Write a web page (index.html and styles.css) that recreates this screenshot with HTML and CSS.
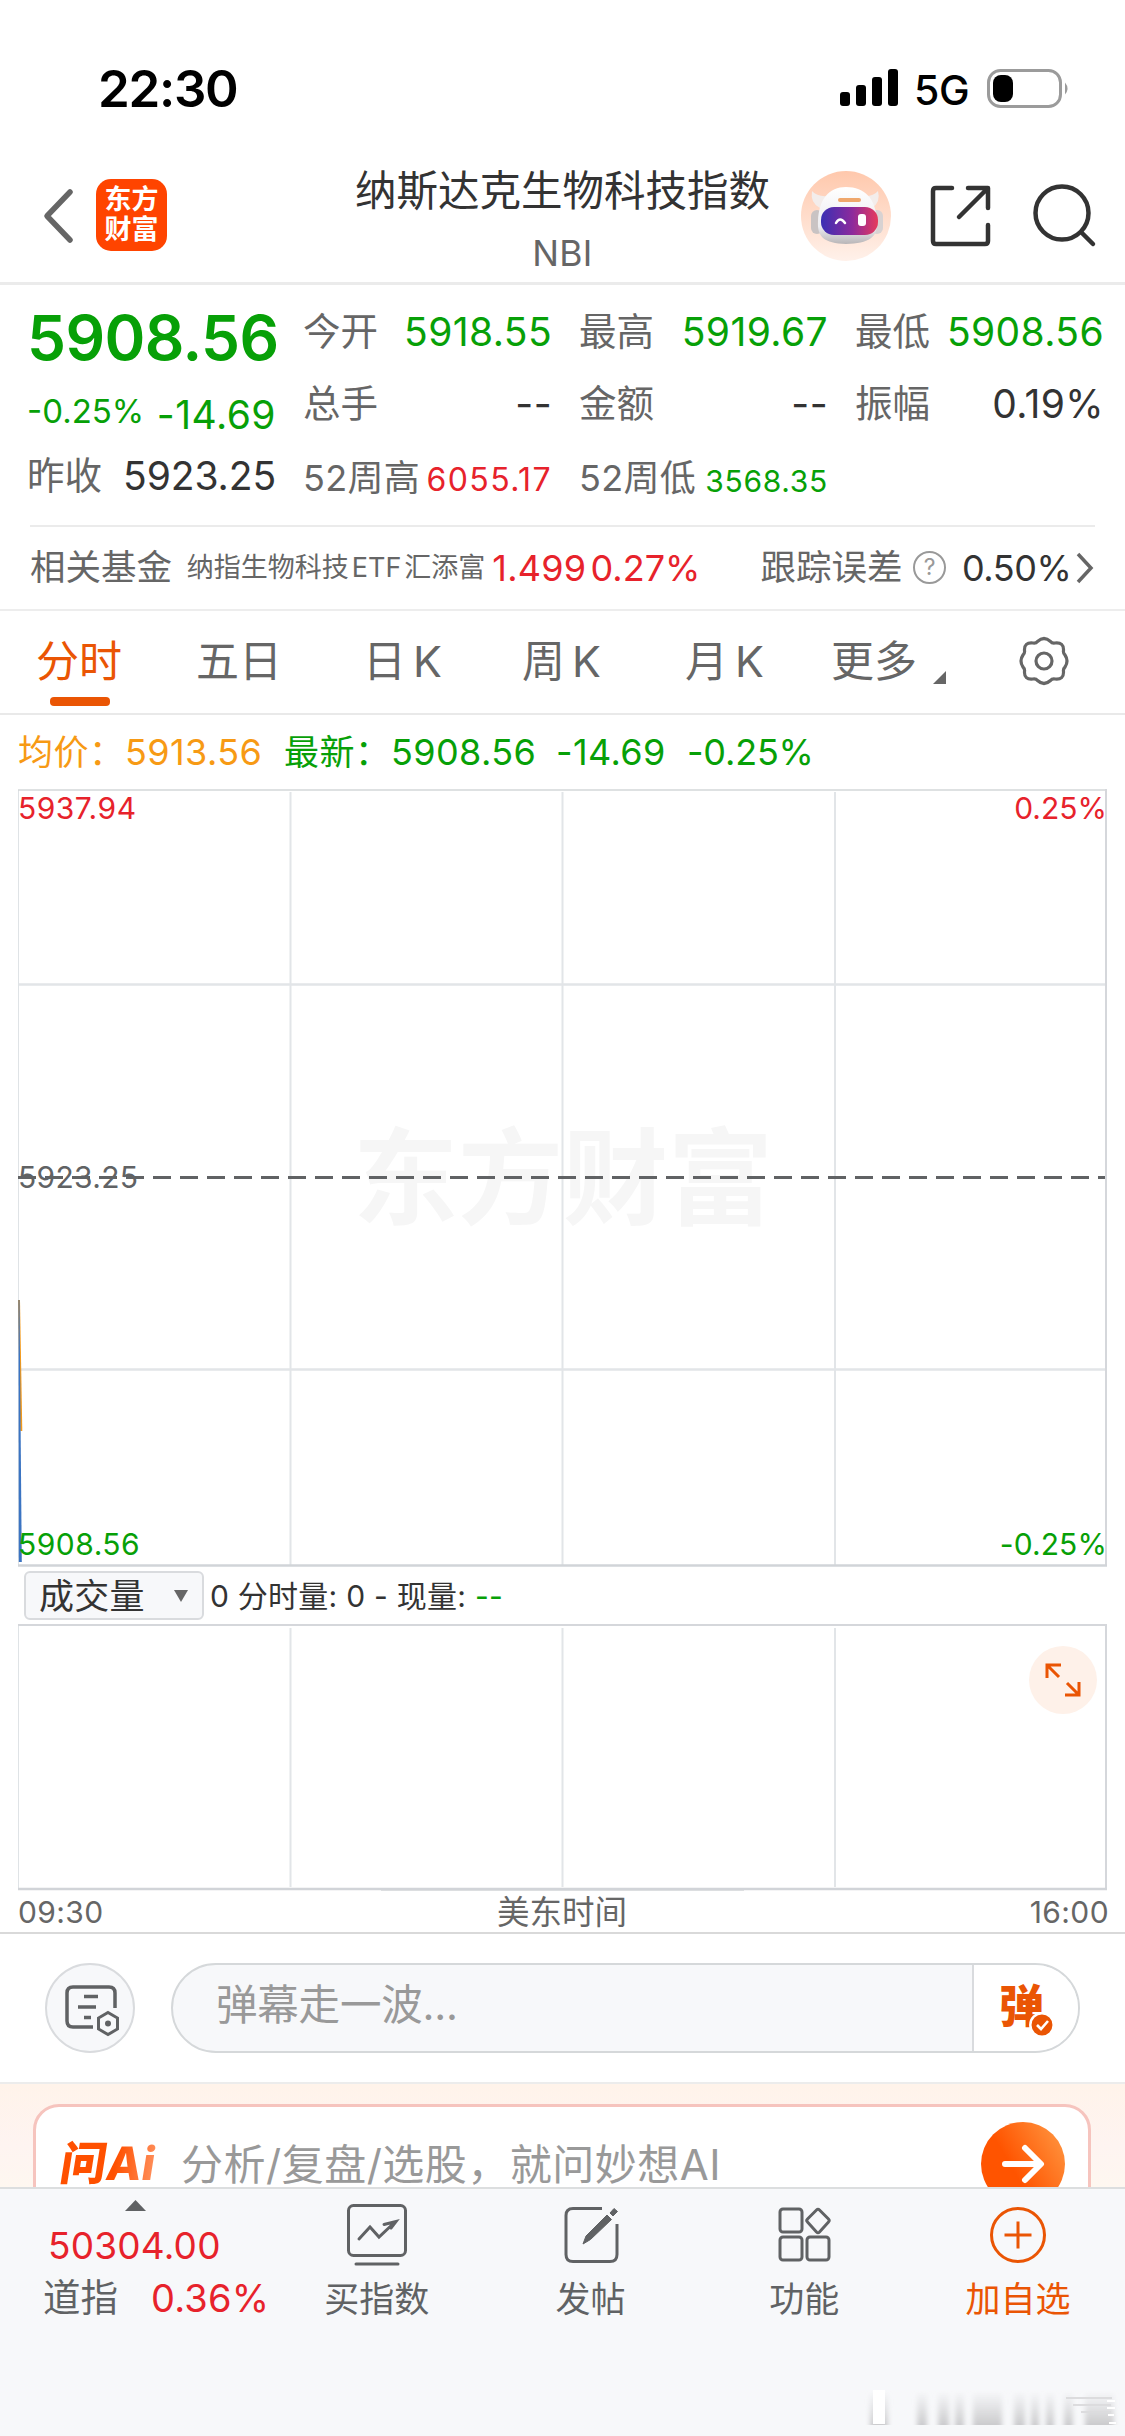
FILE: index.html
```
<!DOCTYPE html>
<html lang="zh-CN">
<head>
<meta charset="utf-8">
<title>纳斯达克生物科技指数</title>
<link rel="stylesheet" href="styles.css">
</head>
<body>
<div class="phone">
  <div class="status">
    <span class="clock">22:30</span>
    <div class="status-right">
      <svg width="60" height="38" viewBox="0 0 60 38"><rect x="0" y="23" width="10" height="14" rx="3"/><rect x="16" y="16" width="10" height="21" rx="3"/><rect x="32" y="8" width="10" height="29" rx="3"/><rect x="48" y="0" width="10" height="37" rx="3"/></svg>
      <span class="net">5G</span>
      <svg width="84" height="40" viewBox="0 0 84 40"><rect x="1.5" y="1.5" width="72" height="36" rx="12" fill="none" stroke="#9b9b9b" stroke-width="3"/><rect x="6" y="6" width="20" height="27" rx="8"/><path d="M78 13.500q5 6-0 12z" fill="#9b9b9b"/></svg>
    </div>
  </div>

  <header class="header">
    <div class="head-left">
      <svg class="back" width="32" height="56" viewBox="0 0 32 56"><path d="M27 4 4 28l23 24" fill="none" stroke="#666" stroke-width="5.500" stroke-linecap="round" stroke-linejoin="round"/></svg>
      <div class="logo"><span>东方</span><span>财富</span></div>
    </div>
    <div class="title"><h1>纳斯达克生物科技指数</h1><span>NBI</span></div>
    <div class="head-right">
      <svg width="90" height="90" viewBox="0 0 90 90">
        <defs>
          <linearGradient id="halo" x1="0" y1="0" x2="0" y2="1"><stop offset="0" stop-color="#ffc8ac"/><stop offset="1" stop-color="#fff1ea"/></linearGradient>
          <linearGradient id="visor"><stop offset="0" stop-color="#3930b4"/><stop offset=".55" stop-color="#8d2a9c"/><stop offset="1" stop-color="#e63b5c"/></linearGradient>
          <linearGradient id="shell" x1="0" y1="0" x2="0" y2="1"><stop offset="0" stop-color="#fff"/><stop offset=".7" stop-color="#ececf0"/><stop offset="1" stop-color="#b9b6b8"/></linearGradient>
        </defs>
        <circle cx="45" cy="45" r="45" fill="url(#halo)"/>
        <path d="M11 20q-2 12 8 17l8-12q-11 1-16-5zM77 20q3 11-6 17l-9-12q10 1 15-5z" fill="#f3edeb"/>
        <rect x="10" y="39" width="12" height="24" rx="6" fill="#c9c3c3"/><rect x="70" y="39" width="12" height="24" rx="6" fill="#d8d2d2"/>
        <path d="M45 16C28 16 18 28 17 50c-1 16 6 22 28 23 23-1 32-6 31-23-1-22-12-34-31-34z" fill="url(#shell)"/>
        <rect x="37" y="27" width="23" height="4" rx="2" fill="#efa76c"/>
        <rect x="20" y="36" width="57" height="28" rx="13" fill="url(#visor)"/>
        <path d="M35 52q4-7 9 0" fill="none" stroke="#fff" stroke-width="2.500" stroke-linecap="round"/>
        <rect x="57" y="43" width="8" height="12" rx="3" fill="#fff"/>
      </svg>
      <svg width="64" height="64" viewBox="0 0 64 64" fill="none" stroke="#333" stroke-width="4.500" stroke-linecap="round" stroke-linejoin="round"><path d="M23 4H7q-3 0-3 3v50q0 3 3 3h49q3 0 3-3V41M39 4h20v20M58 5 30 33"/></svg>
      <svg width="66" height="66" viewBox="0 0 66 66" fill="none" stroke="#333" stroke-width="4.500" stroke-linecap="round"><circle cx="30" cy="31" r="26.500"/><path d="m50 51 11 11"/></svg>
    </div>
  </header>

  <section class="quote">
    <div class="cell lead"><b class="price">5908.56</b></div>
    <div class="cell"><label>今开</label><span class="down">5918.55</span></div>
    <div class="cell"><label>最高</label><span class="down">5919.67</span></div>
    <div class="cell"><label>最低</label><span class="down">5908.56</span></div>
    <div class="cell change"><span class="down pct">-0.25%</span><span class="down diff">-14.69</span></div>
    <div class="cell"><label>总手</label><span>--</span></div>
    <div class="cell"><label>金额</label><span>--</span></div>
    <div class="cell"><label>振幅</label><span>0.19%</span></div>
    <div class="cell"><label>昨收</label><span class="prev">5923.25</span></div>
    <div class="cell year"><label>52周高</label><span class="up">6055.17</span></div>
    <div class="cell year"><label>52周低</label><span class="down low">3568.35</span></div>
  </section>

  <section class="fund">
    <span class="fund-label">相关基金</span>
    <span class="fund-name">纳指生物科技<i>ETF</i>汇添富</span>
    <span class="up nav">1.499</span>
    <span class="up">0.27%</span>
    <span class="fund-label track">跟踪误差</span>
    <span class="help">?</span>
    <span class="err">0.50%</span>
    <svg width="20" height="32" viewBox="0 0 20 32"><path d="m3 2 13 14L3 30" fill="none" stroke="#666" stroke-width="3.500"/></svg>
  </section>

  <nav class="tabs">
    <span class="on">分时</span><span>五日</span><span class="k">日K</span><span class="k">周K</span><span class="k">月K</span>
    <span class="more">更多<svg width="13" height="13" viewBox="0 0 13 13"><path d="M13 0v13H0z" fill="#666"/></svg></span>
    <svg class="gear" width="52" height="50" viewBox="0 0 52 50" fill="none" stroke="#666" stroke-width="3.200" stroke-linejoin="round"><path d="M19.500 5.500Q26-.5 32.500 5.500q1.500 2 4.500 1.500 9-1 8.500 7.500-.5 2.500 1.500 4.500 4 6 0 12-2 2-1.500 4.500Q46 44 37 43q-3-.5-4.500 1.500-6.500 6-13 0Q18 42.500 15 43q-9 1-8.500-7.500Q7 33 5 31q-4-6 0-12 2-2 1.500-4.500Q6 6 15 7q3 .5 4.500-1.500z"/><circle cx="26" cy="25" r="8"/></svg>
  </nav>

  <div class="legend"><span class="name avg">均价：</span><span class="v1 avg">5913.56</span><span class="name down">最新：</span><span class="v2 down">5908.56</span><span class="v3 down">-14.69</span><span class="down">-0.25%</span></div>

  <div class="chart">
    <div class="brand">东方财富</div>
    <svg width="1090" height="778" viewBox="0 0 1090 778" fill="none">
      <path d="M272.500 3v773M544.500 3v773M817 3v773" stroke="#e2e5e8" stroke-width="2"/>
      <path d="M0 195.500h1088M0 580.500h1088" stroke="#e2e5e8" stroke-width="2.500"/>
      <path d="M.5 1v776" stroke="#dfe3e6"/><path d="M0 1h1089" stroke="#d3d7d8" stroke-width="1.500"/><path d="M1088 0v777" stroke="#d5d7db" stroke-width="2"/>
      <path d="M0 776.500h1089" stroke="#d1d4d8" stroke-width="2.500"/>
      <path d="M0 388.500h1087" stroke="#606264" stroke-width="3" stroke-dasharray="18 9"/>
      <path d="M1 511 3.300 642" stroke="#f39a1c" stroke-width="2"/>
      <path d="M.5 511h1l2.300 262h-3z" fill="#3b74c2"/>
    </svg>
    <span class="tag tl up">5937.94</span><span class="tag tr up">0.25%</span>
    <span class="tag ml">5923.25</span>
    <span class="tag bl down">5908.56</span><span class="tag br down">-0.25%</span>
  </div>

  <div class="volbar">
    <div class="select">成交量<svg width="14" height="12" viewBox="0 0 14 12"><path d="M0 0h14L7 12z" fill="#666"/></svg></div>
    <span>0 分时量: 0 - 现量: <em class="down">--</em></span>
  </div>

  <div class="volume">
    <svg width="1090" height="267" viewBox="0 0 1090 267" fill="none">
      <path d="M272.500 4v259M544.500 4v259M817 4v259" stroke="#e2e5e8" stroke-width="2"/>
      <path d="M.5 1v265" stroke="#dfe3e6"/><path d="M0 1h1088v264" stroke="#d5d7db" stroke-width="2"/><path d="M0 265h1089" stroke="#d1d4d8" stroke-width="2.500"/>
      <path d="M363 266.500h363" stroke="#dcdee0"/>
    </svg>
    <div class="expand"><svg width="36" height="36" viewBox="0 0 36 36" fill="none" stroke="#ea5504" stroke-width="3"><path d="M2 16V3h14M3 4l11 11M34 20v13H20M33 32 22 21"/></svg></div>
  </div>
  <div class="axis"><span>09:30</span><span class="zone">美东时间</span><span>16:00</span></div>

  <div class="danmu">
    <div class="set"><svg width="88" height="88" viewBox="0 0 88 88" fill="none" stroke="#606264" stroke-width="3.500"><path d="M47 63H27q-6 0-6-6V29q0-6 6-6h36q6 0 6 6v15M38 32.500h14M32 43h18M38 53.500h7"/><path d="m62 48.500 9.500 5.500v11L62 70.500 52.500 65V54z" stroke-width="3"/><circle cx="62" cy="59.500" r="3" fill="#606264" stroke="none"/></svg></div>
    <div class="field"><span class="hint">弹幕走一波...</span>
      <div class="send"><span>弹</span><svg width="26" height="26" viewBox="0 0 26 26"><circle cx="13" cy="13" r="11.700" fill="#ea5504" stroke="#fff" stroke-width="2.500"/><path d="m8 13 4 4 7-8" fill="none" stroke="#fff" stroke-width="2.600"/></svg></div>
    </div>
  </div>

  <div class="ai">
    <div class="ask">
      <span class="ai-logo"><i>问</i>Ai</span>
      <span class="ai-hint">分析/复盘/选股，就问妙想AI</span>
      <span class="go"><svg width="44" height="40" viewBox="0 0 44 40" fill="none" stroke="#fff" stroke-width="6" stroke-linecap="round" stroke-linejoin="round"><path d="M4 20h35M24 4l16 16-16 16"/></svg></span>
    </div>
  </div>

  <footer class="bottom">
    <div class="index">
      <svg width="21" height="11" viewBox="0 0 21 11"><path d="M10.500 0 21 11H0z" fill="#606264"/></svg>
      <span class="up pts">50304.00</span>
      <div class="dow"><span>道指</span><span class="up">0.36%</span></div>
    </div>
    <div class="item"><svg width="64" height="64" viewBox="0 0 64 64" fill="none" stroke="#606264" stroke-width="3" stroke-linecap="round"><rect x="3.500" y="3.500" width="57" height="50" rx="5"/><path d="M11 62h42"/><path d="M14 37l11-12 9 10 16-15M39 22.500l12-3-5 6.500"/></svg><span>买指数</span></div>
    <div class="item"><svg width="64" height="64" viewBox="0 0 64 64" fill="none" stroke="#606264" stroke-width="3"><path d="M43 6.500H14q-7 0-7 7v39q0 7 7 7h37q7 0 7-7V22"/><path d="m24 42 3-8 21-21 4.500 4.500-21 20zM51 11l4-4.500 3.500 3L54 14z" fill="#606264" stroke-width="1"/></svg><span>发帖</span></div>
    <div class="item"><svg width="64" height="64" viewBox="0 0 64 64" fill="none" stroke="#606264" stroke-width="3"><rect x="8" y="7" width="22" height="23" rx="3"/><rect x="8" y="35" width="22" height="23" rx="3"/><rect x="35" y="35" width="22" height="23" rx="3"/><path d="m44.500 8-9 9q-1.500 1.500 0 3l9 10q1.500 1.500 3 0l9-10q1.500-1.500 0-3l-9-9q-1.500-1.500-3 0z"/></svg><span>功能</span></div>
    <div class="item add"><svg width="64" height="64" viewBox="0 0 64 64" fill="none" stroke="#ea5504" stroke-width="3"><circle cx="32" cy="33" r="26.500"/><path d="M32 19.500v27M18.500 33h27"/></svg><span>加自选</span></div>
    <svg class="smudge" width="260" height="44" viewBox="0 0 260 44">
      <defs>
        <linearGradient id="fade" x1="0" y1="0" x2="0" y2="1"><stop offset="0" stop-color="#cfcfd1" stop-opacity="0"/><stop offset="1" stop-color="#cbcbcd"/></linearGradient>
        <filter id="soft" x="-5%" y="-20%" width="110%" height="140%"><feGaussianBlur stdDeviation="2.500 .6"/></filter>
      </defs>
      <g filter="url(#soft)" fill="url(#fade)"><path d="M9 5h18v34H9zM56 5h10v34H56zM77 5h11v34H77zM94 5h9v34h-9zM112 5h29v34h-29zM153 5h11v34h-11zM170 5h8v34h-8zM185 5h8v34h-8zM203 5h9v34h-9zM224 5h29v34h-29z"/></g>
      <path d="M12 4h12v34H12z" fill="#fff"/>
      <path d="M205 12h46M212 19h38M220 26h30" stroke="#dcdcde" stroke-width="2"/>
      <path d="M246 15h8M246 22h8M247 29h6M248 37h7" stroke="#fff" stroke-width="2"/>
    </svg>
  </footer>
</div>
</body>
</html>
```
FILE: styles.css
```
* { box-sizing: border-box; margin: 0; padding: 0; }
body { width: 1125px; background: #fff; color: #333; font-family: Inter, "Noto Sans CJK SC", sans-serif; }
svg { display: block; flex: none; }
i, em { font-style: normal; }
span, label, b { white-space: nowrap; }
.phone { width: 1125px; height: 2436px; overflow: hidden; display: flex; flex-direction: column; }
.phone > * { flex: none; }
.up { color: #e7222b; }
.down { color: #07a007; }

.status { height: 150px; padding: 69px 54px 0 98px; display: flex; justify-content: space-between; line-height: 40px; color: #000; }
.clock { font-size: 51px; font-weight: 600; letter-spacing: -1.3px; }
.status-right { display: flex; }
.net { font-size: 41px; font-weight: 500; margin: 1px 19px 0 14px; width: 54px; letter-spacing: -.4px; }

.header { height: 132px; display: flex; justify-content: space-between; position: relative; }
.head-left { display: flex; padding-left: 43px; }
.back { margin: 38px 22px 0 0; }
.logo { width: 71px; height: 72px; margin-top: 29px; margin-left: -1px; border-radius: 15px; background: #ff4400; color: #fff; font-size: 27px; font-weight: 700; line-height: 30px; padding-top: 6px; display: flex; flex-direction: column; align-items: center; }
.title { position: absolute; left: 0; right: 0; top: 13px; text-align: center; pointer-events: none; }
.title h1 { font-size: 41.500px; font-weight: 400; line-height: 56px; }
.title span { display: block; font-size: 35.500px; letter-spacing: .3px; line-height: 40px; margin-top: 15px; color: #666; }
.head-right { display: flex; padding: 21px 27px 0 0; }
.head-right svg:nth-child(2) { margin: 13px 39px 0 38px; }
.head-right svg:nth-child(3) { margin-top: 11px; }

.quote { height: 243px; border-top: 3px solid #ebebeb; padding: 11px 0 0 28px; display: grid; grid-template-columns: repeat(4, 248px); grid-auto-rows: 72px; column-gap: 28px; }
.cell { display: flex; justify-content: space-between; align-items: center; line-height: 72px; font-size: 39px; letter-spacing: .4px; height: 72px; }
.cell label { font-size: 37.500px; color: #666; letter-spacing: 0; margin-left: -1px; }
.cell .prev { letter-spacing: -.1px; }
.cell .price { font-size: 62px; font-weight: 600; letter-spacing: -.6px; color: #07a007; margin: 11px 0 0 -1px; }
.change .pct { font-size: 33px; letter-spacing: 0; margin: 13px 0 0 -1px; }
.change .diff { letter-spacing: .5px; margin: 21px 0 0; }
.year label { font-size: 36px; padding-top: 4px; letter-spacing: .3px; }
.year span { font-size: 32px; letter-spacing: 1.4px; padding-top: 8px; }
.year .low { font-size: 30px; letter-spacing: .7px; padding-top: 10px; }

.fund { height: 84px; margin-left: 30px; margin-right: 30px; border-top: 2px solid #ebebeb; display: flex; align-items: center; font-size: 36px; line-height: 50px; padding-bottom: 1px; }
.fund-label { font-size: 35.500px; color: #666; width: 158px; }
.fund-name { font-size: 27px; color: #666; width: 308px; }
.fund-name i { margin: 0 3px; }
.nav { width: 99px; letter-spacing: .2px; }
.track { margin-left: 60px; width: 154px; }
.help { width: 33px; height: 33px; border: 2px solid #999; border-radius: 50%; color: #999; font-size: 23px; line-height: 29px; text-align: center; margin-right: 16px; }
.err { width: 114px; letter-spacing: -.4px; }

.tabs { height: 106px; border-top: 2px solid #ededed; border-bottom: 2px solid #e9e9e9; display: grid; grid-template-columns: 160px 167px 159px 163px 146px 187px 52px; padding-left: 36px; font-size: 43px; line-height: 101px; color: #666; }
.tabs .on { color: #ea5504; display: flex; flex-direction: column; height: 101px; }
.tabs .on::after { content: ""; width: 60px; height: 9px; border-radius: 4px; background: #ea5504; margin: -15px 0 0 14px; }
.tabs .k { letter-spacing: 7px; }
.more { display: flex; }
.more svg { margin: 60px 0 0 16px; }
.gear { margin-top: 25px; }

.legend { height: 74px; padding-left: 18px; display: flex; font-size: 36px; line-height: 74px; letter-spacing: .4px; }
.legend .avg { color: #f79a14; }
.legend .name { font-size: 35px; width: 107px; letter-spacing: .5px; }
.legend .v1 { width: 159px; }
.legend .v2 { width: 165px; }
.legend .v3 { width: 131px; }
.legend span:last-child { letter-spacing: -.2px; }

.chart { position: relative; height: 778px; margin-left: 18px; width: 1090px; }
.chart svg { position: relative; }
.brand { position: absolute; left: 0; right: 0; top: 319px; text-align: center; font-size: 105px; font-weight: 700; line-height: 140px; color: #f6f6f6; }
.tag { position: absolute; font-size: 30px; line-height: 30px; letter-spacing: .5px; }
.tl { left: 0; top: 4px; }
.tr { right: 1px; top: 4px; letter-spacing: 0; }
.ml { left: 0; top: 373px; color: #606264; letter-spacing: .3px; }
.bl { left: 0; top: 740px; }
.br { right: 1px; top: 740px; letter-spacing: .1px; }

.volbar { height: 57px; padding: 4px 0 0 24px; display: flex; font-size: 30px; line-height: 50px; letter-spacing: .25px; }
.select { width: 180px; height: 49px; border: 2px solid #d9dbde; border-radius: 6px; background: #f7f8fa; font-size: 35px; line-height: 46px; padding: 0 14px 0 13px; display: flex; justify-content: space-between; align-items: center; margin-right: 6px; }

.volume { position: relative; height: 267px; margin-left: 18px; width: 1090px; }
.expand { position: absolute; right: 11px; top: 22px; width: 68px; height: 68px; border-radius: 50%; background: #fef1e9; display: flex; align-items: center; justify-content: center; }
.axis { height: 43px; border-bottom: 2px solid #d9d9d9; padding: 0 16px 0 18px; display: grid; grid-template-columns: 1fr auto 1fr; font-size: 30px; line-height: 43px; color: #666; letter-spacing: .4px; }
.axis .zone { font-size: 32.500px; letter-spacing: 0; margin-left: -3px; }
.axis span:last-child { text-align: right; }

.danmu { height: 148px; display: flex; padding: 29px 0 0 45px; }
.set { width: 90px; height: 90px; border: 2px solid #d9dbde; border-radius: 50%; background: #f7f8fa; margin-right: 36px; }
.set svg { margin: -1px; }
.field { width: 909px; height: 90px; border: 2px solid #d5d8da; border-radius: 45px; background: #f7f8fa; display: flex; justify-content: space-between; overflow: hidden; }
.hint { font-size: 41.500px; line-height: 80px; color: #999; padding-left: 43px; letter-spacing: -.2px; }
.send { width: 106px; background: #fff; border-left: 2px solid #d9dbde; position: relative; color: #ea5504; font-size: 45px; font-weight: 900; line-height: 84px; padding-left: 25px; }
.send svg { position: absolute; left: 55px; top: 47px; }

.ai { height: 105px; border-top: 2px solid #ececec; background: linear-gradient(#fff3ea, #fef4f1 60%, #fef7f0); padding: 20px 34px 0 33px; overflow: hidden; }
.ask { height: 120px; border: 3px solid #f6c4be; border-radius: 26px 26px 0 0; background: #fff; display: flex; padding-left: 25px; }
.ai-logo { width: 120px; height: 50px; margin-top: 31px; font-size: 46px; line-height: 50px; font-weight: 800; letter-spacing: 0; transform: skewX(-9deg); background: linear-gradient(90deg, #ff5000 45%, #ff9a6b 85%); -webkit-background-clip: text; background-clip: text; color: transparent; }
.ai-logo i { font-weight: 900; }
.ai-hint { font-size: 42px; line-height: 50px; margin-top: 33px; color: #999; flex: 1; letter-spacing: .5px; }
.go { width: 84px; height: 84px; border-radius: 50%; margin: 15px 23px 0 0; background: linear-gradient(60deg, #ff5400 40%, #ff8a35 85%); display: flex; align-items: center; justify-content: center; }

.bottom { height: 249px; border-top: 2px solid #dcdedf; background: #f7f8fa; display: flex; position: relative; color: #606264; }
.index { width: 270px; padding-left: 43px; }
.index svg { margin: 11px 0 0 82px; }
.pts { display: block; font-size: 37px; line-height: 50px; margin: 10px 0 0 5px; letter-spacing: .2px; }
.dow { display: flex; gap: 33px; font-size: 37.500px; line-height: 54px; }
.dow .up { font-size: 38px; letter-spacing: .2px; }
.item { flex: 1; display: flex; flex-direction: column; align-items: center; padding-top: 13px; font-size: 35px; line-height: 50px; }
.item span { margin-top: 8px; }
.item.add { color: #ea5504; }
.smudge { position: absolute; right: 4px; bottom: 6px; }
```
